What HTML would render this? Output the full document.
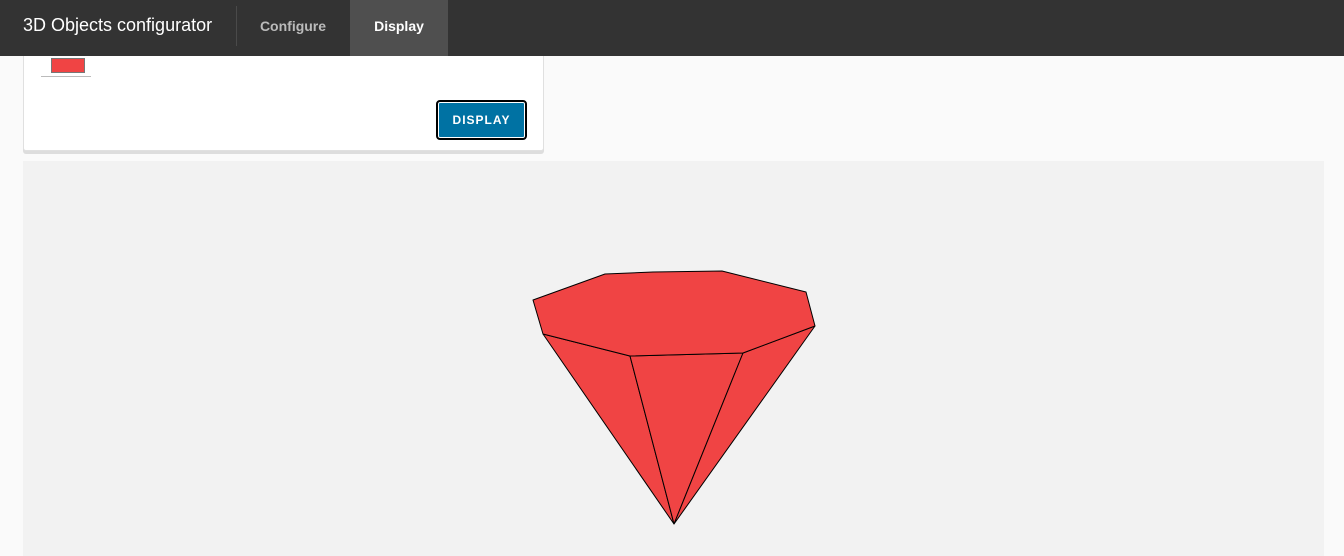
<!DOCTYPE html>
<html><head><style>
body{margin:0;width:1344px;height:556px;overflow:hidden;background:#fafafa;font-family:"Liberation Sans",sans-serif;position:relative}
.hdr{position:absolute;left:0;top:0;width:1344px;height:56px;background:#333}
.t{position:absolute;left:23px;top:15px;color:#fff;font-size:18px}
.div{position:absolute;left:236px;top:6px;width:1px;height:40px;background:#4a4a4a}
.tab{position:absolute;top:0;height:56px;line-height:53px;font-size:14px;text-align:center}
.card{position:absolute;left:23px;top:56px;width:519px;height:94px;background:#fff;border:1px solid #e0e0e0;border-top:none;box-shadow:0 3px 0 #ddd;border-radius:0 0 3px 3px}
.sw{position:absolute;left:27px;top:2px;width:32px;height:13px;background:#f04444;border:1px solid #777}
.ul{position:absolute;left:17px;top:20px;width:50px;height:1px;background:#bbb}
.btn{position:absolute;left:412px;top:44px;width:87px;height:36px;background:#0072a3;border:2px solid #000;border-radius:4px;box-shadow:inset 0 0 0 1px #fff;color:#fff;font-size:12px;font-weight:bold;letter-spacing:1px;line-height:36px;text-align:center}
.cv{position:absolute;left:23px;top:161px;width:1301px;height:395px;background:#f2f2f2}
</style></head><body>
<div class="hdr">
<div class="t">3D Objects configurator</div>
<div class="div"></div>
<div class="tab" style="left:250px;width:86px;color:#bbb;font-weight:bold">Configure</div>
<div class="tab" style="left:350px;width:98px;background:#4f4f4f;color:#fff;font-weight:bold">Display</div>
</div>
<div class="card"><div class="sw"></div><div class="ul"></div><div class="btn">DISPLAY</div></div>
<div class="cv"></div>
<svg style="position:absolute;left:0;top:0" width="1344" height="556">
<g fill="#f04444" stroke="#000" stroke-width="1" stroke-linejoin="round">
<polygon points="543,334 630,356 674,524"/>
<polygon points="630,356 743,353 674,524"/>
<polygon points="743,353 815,326 674,524"/>
<polygon points="533,300 605,274 653,272 722,271 806,292 815,326 743,353 630,356 543,334"/>
</g></svg>
</body></html>
